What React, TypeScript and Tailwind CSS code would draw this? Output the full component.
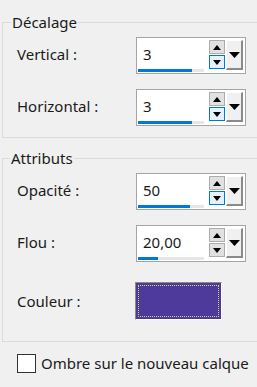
import React from "react";

const FONT = { fontFamily: '"Noto Sans", "Open Sans", sans-serif' };

function UpArrow() {
  return (
    <svg width="8" height="5" viewBox="0 0 8 5">
      <path d="M0 5 L4 0 L8 5 Z" fill="#000" />
    </svg>
  );
}

function DownArrow({ w = 8, h = 5 }: { w?: number; h?: number }) {
  return (
    <svg width={w} height={h} viewBox={`0 0 ${w} ${h}`}>
      <path d={`M0 0 L${w} 0 L${w / 2} ${h} Z`} fill="#000" />
    </svg>
  );
}

function SpinBox({ value, bar, focused }: { value: string; bar: number; focused?: boolean }) {
  return (
    <div className="flex h-[37px] w-[110px] items-stretch border border-[#a5a5a5] bg-white">
      <div className="flex flex-1 flex-col pl-[6px] pr-[4px]">
        <div className="flex flex-1 items-center pt-[2px] text-[15px] text-[#1a1a1a]">{value}</div>
        <div className="mb-[1px] ml-[-5px] h-[3px] w-[66px] bg-[#e6e6e6]">
          <div className="h-full bg-[#0078d7]" style={{ width: bar }} />
        </div>
      </div>
      <div className="flex flex-col pt-[2px]">
        <div className="flex h-[14px] w-[16px] items-center justify-center border border-[#adadad] bg-[#e1e1e1]">
          <UpArrow />
        </div>
        <div
          className={
            focused
              ? "mt-[1px] flex h-[14px] w-[16px] items-center justify-center border border-[#0078d7] bg-[#e5f1fb]"
              : "mt-[1px] flex h-[14px] w-[16px] items-center justify-center border border-[#adadad] bg-[#e1e1e1]"
          }
        >
          <DownArrow />
        </div>
      </div>
      <div className="ml-[1px] mr-[2px] mt-[2px] flex h-[30px] w-[17px] items-center justify-center border-b-2 border-r-2 border-l border-t border-b-[#8a8a8a] border-r-[#8a8a8a] border-l-white border-t-white bg-[#f0f0f0]">
        <DownArrow w={11} h={6} />
      </div>
    </div>
  );
}

function Row({ label, children }: { label: string; children: React.ReactNode }) {
  return (
    <div className="flex items-center">
      <div className="w-[133px] pl-[14px] pb-[2px] text-[15px] text-[#1a1a1a]">{label}</div>
      {children}
    </div>
  );
}

export default function App() {
  return (
    <div className="h-[387px] w-[257px] overflow-hidden bg-[#f0f0f0] pt-[12px]" style={FONT}>
      <fieldset className="ml-[2px] w-[270px] border border-[#dcdcdc] pb-[11px] pt-[5px]">
        <legend className="ml-[8px] px-[1px] text-[15px] leading-[20px] text-[#1a1a1a]">Décalage</legend>
        <div className="flex flex-col gap-[15px]">
          <Row label="Vertical :">
            <SpinBox value="3" bar={54} focused />
          </Row>
          <Row label="Horizontal :">
            <SpinBox value="3" bar={54} focused />
          </Row>
        </div>
      </fieldset>

      <fieldset className="ml-[2px] mt-[10px] w-[270px] border border-[#dcdcdc] pb-[21px] pt-[5px]">
        <legend className="ml-[7px] px-[1px] text-[15px] leading-[20px] text-[#1a1a1a]">Attributs</legend>
        <div className="flex flex-col gap-[15px]">
          <Row label="Opacité :">
            <SpinBox value="50" bar={52} focused />
          </Row>
          <Row label="Flou :">
            <SpinBox value="20,00" bar={20} />
          </Row>
          <div className="mt-[5px] flex items-center">
            <div className="w-[132px] pl-[14px] text-[15px] text-[#1a1a1a]">Couleur :</div>
            <div className="h-[38px] w-[87px] border border-b-white border-r-white border-l-[#8a8a8a] border-t-[#8a8a8a] bg-[#4d3a9b] p-[2px]">
              <div className="h-full w-full border border-dotted border-[#d6d46a]" />
            </div>
          </div>
        </div>
      </fieldset>

      <label className="ml-[17px] mt-[10px] flex items-center gap-[5px] text-[15px] text-[#1a1a1a]">
        <span className="h-[19px] w-[19px] border border-[#333] bg-white" />
        <span>Ombre sur le nouveau calque</span>
      </label>
    </div>
  );
}
